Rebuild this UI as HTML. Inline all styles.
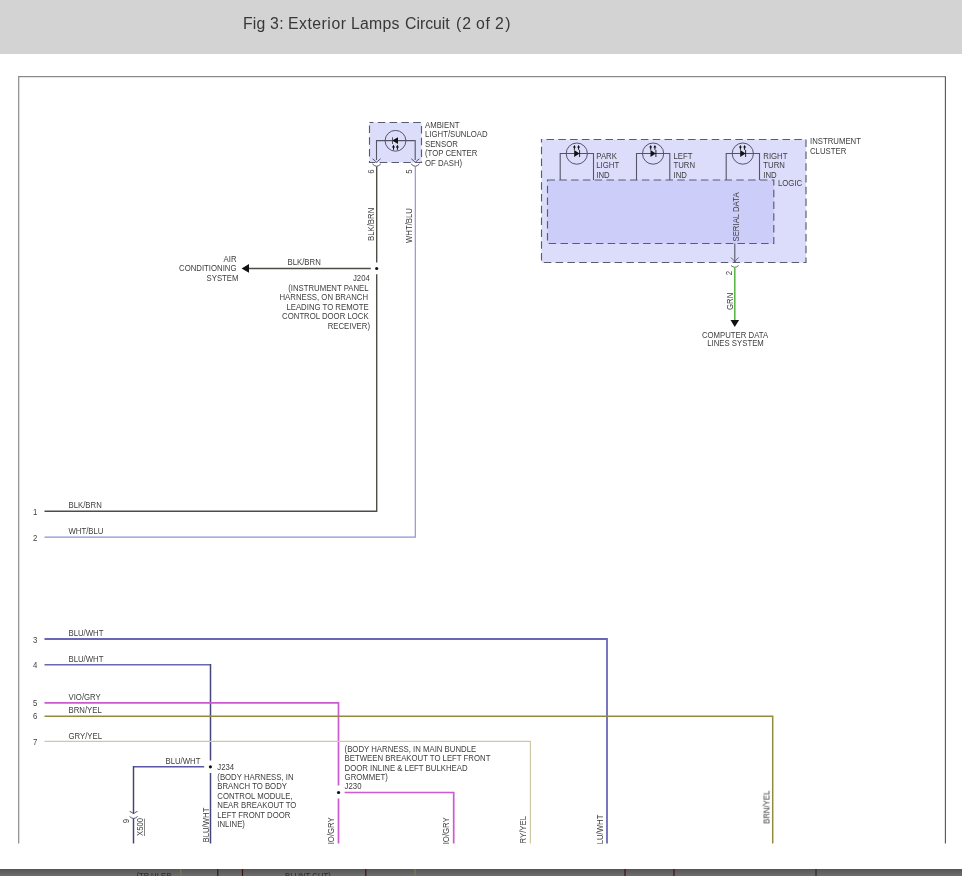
<!DOCTYPE html>
<html><head><meta charset="utf-8">
<style>
html,body{margin:0;padding:0;width:962px;height:876px;overflow:hidden;background:#fff;font-family:"Liberation Sans",sans-serif;}
#hdr{position:absolute;left:0;top:0;width:962px;height:54px;background:#d3d3d3;}
.w{position:absolute;top:15px;font-size:15.8px;letter-spacing:0.3px;color:#383838;white-space:nowrap;will-change:transform;}
#foot{position:absolute;left:0;top:869px;width:962px;height:7px;background:linear-gradient(#555,#6e6e6e);}
svg{position:absolute;left:0;top:0;}
.t{will-change:transform;}
.t text{font-family:"Liberation Sans",sans-serif;font-size:8.6px;fill:#3d3d3d;}
</style></head><body>
<div id="hdr"><span class="w" style="left:242.6px;letter-spacing:0.15px">Fig</span><span class="w" style="left:269.8px;letter-spacing:0.5px">3:</span><span class="w" style="left:288.2px;letter-spacing:0.5px">Exterior</span><span class="w" style="left:350.7px;letter-spacing:0.25px">Lamps</span><span class="w" style="left:405.0px;letter-spacing:0px">Circuit</span><span class="w" style="left:455.6px;letter-spacing:1.0px">(2</span><span class="w" style="left:476.0px;letter-spacing:0.8px">of</span><span class="w" style="left:494.7px;letter-spacing:1.5px">2)</span></div>

<svg width="962" height="876" viewBox="0 0 962 876">
<defs><clipPath id="clip"><rect x="0" y="54" width="962" height="789.5"/></clipPath></defs>
<g clip-path="url(#clip)">
<path d="M18.7,850 V76.7 H945" fill="none" stroke="#8a8a8a" stroke-width="1.2"/><path d="M945.4,76.2 V850" fill="none" stroke="#555" stroke-width="1.1"/>

<rect x="369.5" y="122.5" width="52" height="40" fill="#dcdcfb" stroke="#5a5a70" stroke-width="1.15" stroke-dasharray="7.5 4.3" stroke-dashoffset="3.5"/>
<circle cx="395.5" cy="140.8" r="10.4" fill="none" stroke="#45455a" stroke-width="0.9"/>
<path d="M376.5,160 V140.6 H415.2 V160" fill="none" stroke="#555566" stroke-width="1.1"/>
<path d="M392.3,140.6 L398,137.3 V143.9 Z" fill="#111"/>
<path d="M392.5,137.3 V144" stroke="#333" stroke-width="0.8"/>
<path d="M393.5,149.8 V146.8 M397.4,149.8 V146.8" stroke="#111" stroke-width="1"/>
<path d="M391.9,147.6 L393.5,144.8 L395.1,147.6 Z M395.8,147.6 L397.4,144.8 L399,147.6 Z" fill="#111"/>
<path d="M372.6,158.8 Q376.6,161.8 376.6,162.6 Q376.6,161.8 380.6,158.8 M411.3,158.8 Q415.3,161.8 415.3,162.6 Q415.3,161.8 419.3,158.8" fill="none" stroke="#555566" stroke-width="1"/>
<path d="M372.4,163.9 Q376.6,168.6 380.8,163.9 M411.1,163.9 Q415.3,168.6 419.5,163.9" fill="none" stroke="#555566" stroke-width="1"/>

<path d="M376.7,166.6 V262.5 M376.7,274.3 V511.2 H44.5" fill="none" stroke="#4e4c46" stroke-width="1.4"/>
<circle cx="376.7" cy="268.5" r="1.6" fill="#111"/>
<path d="M370.8,268.5 H248" fill="none" stroke="#4e4c46" stroke-width="1.4"/>
<path d="M241.6,268.4 L249,264 V272.8 Z" fill="#111"/>
<path d="M415.3,166.6 V537.1 H44.5" fill="none" stroke="#8e92d2" stroke-width="1.15"/>

<rect x="541.5" y="139.5" width="264.5" height="123" fill="#dcdcfb" stroke="#5a5a70" stroke-width="1.15" stroke-dasharray="7.5 4.3" stroke-dashoffset="6.8"/>
<rect x="547.5" y="180" width="226.3" height="63.5" fill="#cdcdfa" stroke="#5a5a70" stroke-width="1.15" stroke-dasharray="7.5 4.3"/>
<g transform="translate(0,0)">
<circle cx="576.8" cy="153.6" r="10.6" fill="none" stroke="#45455a" stroke-width="0.9"/>
<path d="M560.2,180 V153.5 H593.5 V180" fill="none" stroke="#555566" stroke-width="1.1"/>
<path d="M579.5,153.5 L574.2,150 V157 Z" fill="#111"/>
<path d="M579.6,150 V157" stroke="#111" stroke-width="0.9"/>
<path d="M574.4,149.8 V147 M578.6,149.8 V147" stroke="#111" stroke-width="1"/>
<path d="M572.9,147.6 L574.4,145 L575.9,147.6 Z M577.1,147.6 L578.6,145 L580.1,147.6 Z" fill="#111"/>
</g>
<g transform="translate(76.3,0)">
<circle cx="576.8" cy="153.6" r="10.6" fill="none" stroke="#45455a" stroke-width="0.9"/>
<path d="M560.2,180 V153.5 H593.5 V180" fill="none" stroke="#555566" stroke-width="1.1"/>
<path d="M579.5,153.5 L574.2,150 V157 Z" fill="#111"/>
<path d="M579.6,150 V157" stroke="#111" stroke-width="0.9"/>
<path d="M574.4,149.8 V147 M578.6,149.8 V147" stroke="#111" stroke-width="1"/>
<path d="M572.9,147.6 L574.4,145 L575.9,147.6 Z M577.1,147.6 L578.6,145 L580.1,147.6 Z" fill="#111"/>
</g>
<g transform="translate(166,0)">
<circle cx="576.8" cy="153.6" r="10.6" fill="none" stroke="#45455a" stroke-width="0.9"/>
<path d="M560.2,180 V153.5 H593.5 V180" fill="none" stroke="#555566" stroke-width="1.1"/>
<path d="M579.5,153.5 L574.2,150 V157 Z" fill="#111"/>
<path d="M579.6,150 V157" stroke="#111" stroke-width="0.9"/>
<path d="M574.4,149.8 V147 M578.6,149.8 V147" stroke="#111" stroke-width="1"/>
<path d="M572.9,147.6 L574.4,145 L575.9,147.6 Z M577.1,147.6 L578.6,145 L580.1,147.6 Z" fill="#111"/>
</g>
<path d="M734.8,243.5 V262" fill="none" stroke="#555566" stroke-width="1.1"/>
<path d="M731,257.5 Q734.8,261 734.8,262.3 Q734.8,261 738.6,257.5" fill="none" stroke="#555566" stroke-width="0.9"/>
<path d="M731,265.5 Q734.8,269 738.6,265.5" fill="none" stroke="#555566" stroke-width="0.9"/>
<path d="M734.8,268 V321" fill="none" stroke="#48b030" stroke-width="1.4"/>
<path d="M730.5,320 H739.1 L734.8,327 Z" fill="#111"/>

<g fill="none">
<path d="M44.5,639 H607 V850" stroke="#6a68b6" stroke-width="1.8"/>
<path d="M44.5,664.8 H210.5" stroke="#6a68b0" stroke-width="1.6"/><path d="M210.5,664 V760.6 M210.5,773 V850" stroke="#46467a" stroke-width="1.5"/>
<path d="M204.2,766.8 H133.5" stroke="#5856a6" stroke-width="1.6"/><path d="M133.5,766 V813.6 M133.5,818.5 V850" stroke="#424276" stroke-width="1.45"/>
<path d="M44.5,702.8 H338.5 V785.4 M338.5,798.5 V850" stroke="#cc5ad2" stroke-width="1.7"/>
<path d="M344.6,792.5 H453.7 V850" stroke="#cc5ad2" stroke-width="1.7"/>
<path d="M44.5,716.3 H772.7 V850" stroke="#948a3e" stroke-width="1.5"/>
<path d="M44.5,741.3 H530.4 V850" stroke="#cbc9a6" stroke-width="1.2"/>
<path d="M129.6,811.3 Q133.5,813 133.5,814 Q133.5,813 137.6,811.3" stroke="#40407a" stroke-width="0.9"/>
<path d="M129.6,816.4 Q133.5,820.5 137.6,816.4" stroke="#40407a" stroke-width="0.9"/>
</g>
<circle cx="210.4" cy="766.8" r="1.6" fill="#111"/>
<circle cx="338.6" cy="792.5" r="1.6" fill="#111"/>
<path d="M144.5,836 V818.7" stroke="#333" stroke-width="0.6"/>
<g class="t">
<text transform="translate(425,127.6) scale(0.905,1)">AMBIENT</text>
<text transform="translate(425,137.15) scale(0.905,1)">LIGHT/SUNLOAD</text>
<text transform="translate(425,146.7) scale(0.905,1)">SENSOR</text>
<text transform="translate(425,156.25) scale(0.905,1)">(TOP CENTER</text>
<text transform="translate(425,165.8) scale(0.905,1)">OF DASH)</text>
<text transform="translate(374,171.5) rotate(-90) scale(0.905,1)" text-anchor="middle">6</text>
<text transform="translate(412,171.5) rotate(-90) scale(0.905,1)" text-anchor="middle">5</text>
<text transform="translate(374.3,241) rotate(-90) scale(0.905,1)">BLK/BRN</text>
<text transform="translate(412.4,243) rotate(-90) scale(0.905,1)">WHT/BLU</text>
<text transform="translate(287.5,264.7) scale(0.905,1)">BLK/BRN</text>
<text transform="translate(236.5,261.8) scale(0.905,1)" text-anchor="end">AIR</text>
<text transform="translate(236.5,271.2) scale(0.905,1)" text-anchor="end">CONDITIONING</text>
<text transform="translate(238.5,280.6) scale(0.905,1)" text-anchor="end">SYSTEM</text>
<text transform="translate(369.8,280.6) scale(0.905,1)" text-anchor="end">J204</text>
<text transform="translate(368.6,290.5) scale(0.905,1)" text-anchor="end">(INSTRUMENT PANEL</text>
<text transform="translate(368,300) scale(0.905,1)" text-anchor="end">HARNESS, ON BRANCH</text>
<text transform="translate(368.6,309.6) scale(0.905,1)" text-anchor="end">LEADING TO REMOTE</text>
<text transform="translate(368.6,319) scale(0.905,1)" text-anchor="end">CONTROL DOOR LOCK</text>
<text transform="translate(370,328.6) scale(0.905,1)" text-anchor="end">RECEIVER)</text>
<text transform="translate(33,515) scale(0.905,1)">1</text>
<text transform="translate(33,541) scale(0.905,1)">2</text>
<text transform="translate(68.5,508) scale(0.905,1)">BLK/BRN</text>
<text transform="translate(68.5,534) scale(0.905,1)">WHT/BLU</text>
<text transform="translate(596.3,158.7) scale(0.905,1)">PARK</text>
<text transform="translate(596.3,168.1) scale(0.905,1)">LIGHT</text>
<text transform="translate(596.3,177.5) scale(0.905,1)">IND</text>
<text transform="translate(673.5,158.7) scale(0.905,1)">LEFT</text>
<text transform="translate(673.5,168.1) scale(0.905,1)">TURN</text>
<text transform="translate(673.5,177.5) scale(0.905,1)">IND</text>
<text transform="translate(763.3,158.7) scale(0.905,1)">RIGHT</text>
<text transform="translate(763.3,168.1) scale(0.905,1)">TURN</text>
<text transform="translate(763.3,177.5) scale(0.905,1)">IND</text>
<text transform="translate(810,143.8) scale(0.905,1)">INSTRUMENT</text>
<text transform="translate(810,153.6) scale(0.905,1)">CLUSTER</text>
<text transform="translate(778,185.6) scale(0.905,1)">LOGIC</text>
<text transform="translate(739.3,241.5) rotate(-90) scale(0.905,1)">SERIAL DATA</text>
<text transform="translate(732.2,273) rotate(-90) scale(0.905,1)" text-anchor="middle">2</text>
<text transform="translate(733,310) rotate(-90) scale(0.905,1)">GRN</text>
<text transform="translate(735,337.8) scale(0.905,1)" text-anchor="middle">COMPUTER DATA</text>
<text transform="translate(735.5,346.4) scale(0.905,1)" text-anchor="middle">LINES SYSTEM</text>
<text transform="translate(33,642.5) scale(0.905,1)">3</text>
<text transform="translate(33,668.3) scale(0.905,1)">4</text>
<text transform="translate(33,706) scale(0.905,1)">5</text>
<text transform="translate(33,719) scale(0.905,1)">6</text>
<text transform="translate(33,744.5) scale(0.905,1)">7</text>
<text transform="translate(68.5,635.7) scale(0.905,1)">BLU/WHT</text>
<text transform="translate(68.5,661.8) scale(0.905,1)">BLU/WHT</text>
<text transform="translate(68.5,700) scale(0.905,1)">VIO/GRY</text>
<text transform="translate(68.5,712.9) scale(0.905,1)">BRN/YEL</text>
<text transform="translate(68.5,738.6) scale(0.905,1)">GRY/YEL</text>
<text transform="translate(165.5,763.7) scale(0.905,1)">BLU/WHT</text>
<text transform="translate(129.3,821) rotate(-90) scale(0.905,1)" text-anchor="middle">9</text>
<text transform="translate(142.8,836) rotate(-90) scale(0.905,1)">X500</text>
<text transform="translate(208.7,842.5) rotate(-90) scale(0.905,1)">BLU/WHT</text>
<text transform="translate(217.3,770.4) scale(0.905,1)">J234</text>
<text transform="translate(217.3,779.8299999999999) scale(0.905,1)">(BODY HARNESS, IN</text>
<text transform="translate(217.3,789.26) scale(0.905,1)">BRANCH TO BODY</text>
<text transform="translate(217.3,798.6899999999999) scale(0.905,1)">CONTROL MODULE,</text>
<text transform="translate(217.3,808.12) scale(0.905,1)">NEAR BREAKOUT TO</text>
<text transform="translate(217.3,817.55) scale(0.905,1)">LEFT FRONT DOOR</text>
<text transform="translate(217.3,826.98) scale(0.905,1)">INLINE)</text>
<text transform="translate(344.6,751.8) scale(0.905,1)">(BODY HARNESS, IN MAIN BUNDLE</text>
<text transform="translate(344.6,761.15) scale(0.905,1)">BETWEEN BREAKOUT TO LEFT FRONT</text>
<text transform="translate(344.6,770.5) scale(0.905,1)">DOOR INLINE &amp; LEFT BULKHEAD</text>
<text transform="translate(344.6,779.8499999999999) scale(0.905,1)">GROMMET)</text>
<text transform="translate(344.6,789.1999999999999) scale(0.905,1)">J230</text>
<text transform="translate(334,849.5) rotate(-90) scale(0.905,1)">VIO/GRY</text>
<text transform="translate(449,849.5) rotate(-90) scale(0.905,1)">VIO/GRY</text>
<text transform="translate(526,849.5) rotate(-90) scale(0.905,1)">GRY/YEL</text>
<text transform="translate(602.5,849.5) rotate(-90) scale(0.905,1)">BLU/WHT</text>
<text transform="translate(769.5,823.8) rotate(-90) scale(0.905,1)">BRN/YEL</text>
</g>
</g>
</svg>
<div id="foot"><svg width="962" height="7" style="position:absolute;left:0;top:0">
<g stroke-width="1.2">
<path d="M180.8,0 V7" stroke="#7a7a58"/><path d="M217.8,0 V7" stroke="#25251c"/><path d="M242.5,0 V7" stroke="#3c1414"/>
<path d="M365.8,0 V7" stroke="#3c1414"/><path d="M415,0 V7" stroke="#7a7a58"/><path d="M625,0 V7" stroke="#3c1414"/>
<path d="M674,0 V7" stroke="#3c1414"/><path d="M816,0 V7" stroke="#2a2a2a"/>
</g>
<text transform="translate(136.5,10) scale(0.9,1)" style="font-family:Liberation Sans,sans-serif;font-size:8.6px;fill:#2a2a2a">(TRAILER</text>
<text transform="translate(285,10) scale(0.9,1)" style="font-family:Liberation Sans,sans-serif;font-size:8.6px;fill:#2a2a2a">BLUNT CUT)</text>
</svg></div>
</body></html>
